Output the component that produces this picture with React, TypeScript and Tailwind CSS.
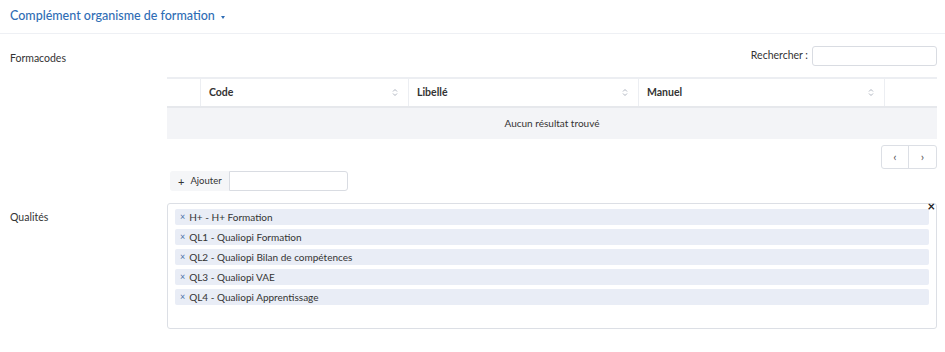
import { useState } from "react";

const qualites = [
  "H+ - H+ Formation",
  "QL1 - Qualiopi Formation",
  "QL2 - Qualiopi Bilan de compétences",
  "QL3 - Qualiopi VAE",
  "QL4 - Qualiopi Apprentissage",
];

function SortIcon() {
  return (
    <svg width="6" height="9" viewBox="0 0 6 9" className="text-gray-400">
      <path d="M1 3.5 L3 1.5 L5 3.5" fill="none" stroke="currentColor" strokeWidth="0.8" />
      <path d="M1 5.5 L3 7.5 L5 5.5" fill="none" stroke="currentColor" strokeWidth="0.8" />
    </svg>
  );
}

export default function App() {
  const [search, setSearch] = useState("");
  const [tags, setTags] = useState(qualites);

  const columns = [
    { label: "Code", width: "w-[208px]" },
    { label: "Libellé", width: "w-[230px]" },
    { label: "Manuel", width: "w-[246px]" },
  ];

  return (
    <div className="w-[945px] h-[352px] bg-white font-['Lato',sans-serif] text-[#333] overflow-hidden">
      {/* Header */}
      <div className="h-[34px] border-b border-[#eef0f4] flex items-center pl-[10px]">
        <span className="text-[12.5px] font-medium text-[#2f6db5]">Complément organisme de formation</span>
        <span className="ml-[6px] mt-[1px] w-0 h-0 border-l-[2.5px] border-r-[2.5px] border-t-[3px] border-l-transparent border-r-transparent border-t-[#2f6db5]" />
      </div>

      {/* Formacodes */}
      <div className="flex pt-[12px]">
        <div className="w-[167px] pl-[10px] pt-[5px] text-[10.5px]">Formacodes</div>
        <div className="w-[770px]">
          <div className="flex justify-end items-center h-[20px]">
            <span className="text-[10.5px] mr-[4px]">Rechercher :</span>
            <input
              value={search}
              onChange={(e) => setSearch(e.target.value)}
              className="w-[125px] h-[20px] border border-[#d9dce2] rounded-[3px] outline-none px-1 text-[11px]"
            />
          </div>

          <div className="mt-[11px] border-t-2 border-[#eceef2]">
            <div className="flex h-[29px] border-b-2 border-[#e6e8ec] text-[10.5px] font-bold">
              <div className="w-[34px] border-r border-[#eceef2]" />
              {columns.map((c) => (
                <div
                  key={c.label}
                  className={`${c.width} border-r border-[#eceef2] flex items-center justify-between pl-[8px] pr-[10px]`}
                >
                  <span>{c.label}</span>
                  <SortIcon />
                </div>
              ))}
              <div className="flex-1" />
            </div>
            <div className="h-[31px] bg-[#f3f4f7] flex items-center justify-center text-[10px]">
              Aucun résultat trouvé
            </div>
          </div>

          <div className="flex justify-end mt-[6px]">
            <div className="flex border border-[#dcdfe5] rounded-[3px] h-[24px] text-[12px] text-[#555]">
              <button className="w-[27px] border-r border-[#dcdfe5] flex items-center justify-center">‹</button>
              <button className="w-[27px] flex items-center justify-center">›</button>
            </div>
          </div>

          <div className="flex items-center mt-[2px] ml-[3px] h-[20px]">
            <button className="h-[20px] w-[59px] bg-[#f5f6f8] rounded-l-[3px] text-[9.5px] flex items-center pl-[8px] gap-[6px]">
              <span className="text-[11px] leading-none">+</span>
              <span>Ajouter</span>
            </button>
            <input className="w-[119px] h-[20px] border border-[#d9dce2] rounded-r-[3px] outline-none px-1 text-[11px]" />
          </div>
        </div>
      </div>

      {/* Qualités */}
      <div className="flex mt-[12px]">
        <div className="w-[167px] pl-[10px] pt-[7px] text-[10.5px]">Qualités</div>
        <div className="relative w-[770px] h-[126px] border border-[#dcdfe5] rounded-[3px] px-[7px] pt-[5px] flex flex-col gap-[4px]">
          {tags.map((t) => (
            <div key={t} className="h-[16px] bg-[#e9edf6] rounded-[2px] flex items-center pl-[5px] text-[10px] text-[#333]">
              <span
                className="text-[#4a6fa8] text-[9px] mr-[4px] cursor-pointer"
                onClick={() => setTags(tags.filter((x) => x !== t))}
              >
                ×
              </span>
              {t}
            </div>
          ))}
          <span className="absolute right-[1px] top-[-4px] text-[13px] font-bold text-[#222] leading-none">×</span>
        </div>
      </div>
    </div>
  );
}
